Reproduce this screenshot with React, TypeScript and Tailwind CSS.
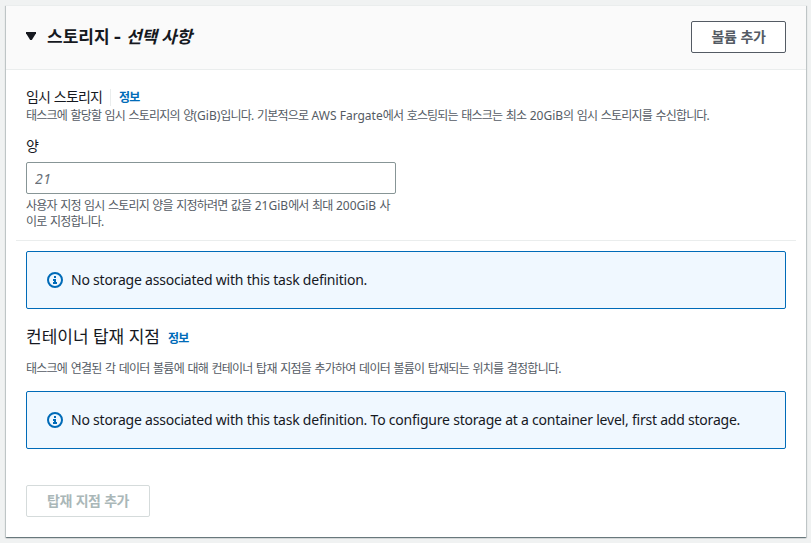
import type { ReactNode } from "react";

function InfoIcon() {
  return (
    <svg viewBox="0 0 16 16" className="h-4 w-4 shrink-0" fill="none" stroke="#006bb8" strokeWidth="2">
      <circle cx="8" cy="8" r="7" />
      <path d="M6 11h4M6 8h2v3M8 4v2" strokeWidth="2" />
    </svg>
  );
}

function Alert({ children }: { children: ReactNode }) {
  return (
    <div className="flex h-[58px] items-center gap-2 rounded-[2px] border border-[#006bb8] bg-[#f0f8ff] px-5 text-sm tracking-[-0.22px] text-[#16191f]">
      <InfoIcon />
      {children}
    </div>
  );
}

function InfoLink() {
  return <a className="text-xs leading-4 font-bold tracking-[-0.7px] text-[#006bb8]">정보</a>;
}

function Latin({ children }: { children: ReactNode }) {
  return <span className="tracking-normal [word-spacing:0px]">{children}</span>;
}

export default function App() {
  return (
    <div className="h-[543px] w-[811px] overflow-hidden bg-[#f0f2f2] pt-[5px] pl-[6px] font-['Noto_Sans','Noto_Sans_CJK_KR',sans-serif] whitespace-nowrap">
      <section className="flex h-[532px] w-[800px] flex-col border-t border-[#eaeded] bg-white shadow-[0_1px_1px_0_rgba(0,28,36,0.4),1px_1px_1px_0_rgba(0,28,36,0.15),-1px_1px_1px_0_rgba(0,28,36,0.15)]">
        <header className="flex h-16 shrink-0 items-center justify-between border-b border-[#eaeded] bg-[#fafafa] px-5 pb-[2px]">
          <div className="flex items-center">
            <svg viewBox="0 0 10 8" className="mb-[2px] h-2 w-[10px]" fill="#16191f">
              <path d="M0 0h10v1.2L5.8 8H4.2L0 1.2z" />
            </svg>
            <h2 className="ml-[11px] flex text-[17px] leading-6 font-bold whitespace-pre text-[#16191f]">
              <span>스토리지 </span>
              <span className="w-3 origin-left scale-x-125">- </span>
              <span className="tracking-[-0.2px] italic">선택 사항</span>
            </h2>
          </div>
          <button className="h-8 w-[95px] rounded-[2px] border border-[#545b64] bg-white text-sm leading-5 font-bold text-[#545b64]">
            <span className="tracking-[-0.4px] [word-spacing:1px]">볼륨 추가</span>
          </button>
        </header>

        <div className="flex flex-col px-5 pt-[17px]">
          <div className="flex h-5 items-center text-sm text-[#16191f]">
            <span className="tracking-[-0.85px] [word-spacing:1px]">임시 스토리지</span>
            <span className="mr-2 ml-2 h-[17px] w-px bg-[#eaeded]" />
            <span className="flex pt-px"><InfoLink /></span>
          </div>
          <p className="mt-px h-4 text-xs leading-4 tracking-[-0.8px] text-[#545b64] [word-spacing:1.15px]">
            태스크에 할당할 임시 스토리지의 양<Latin>(GiB)</Latin>입니다. 기본적으로 <Latin>AWS Fargate</Latin>에서 호스팅되는 태스크는 최소 <Latin>20GiB</Latin>의 임시 스토리지를 수신합니다.
          </p>
          <label className="mt-3 h-5 text-sm leading-5 tracking-[-0.6px] text-[#16191f]">양</label>
          <input
            placeholder="21"
            className="mt-[6px] h-8 w-[370px] rounded-[2px] border border-[#879596] bg-white px-2 text-sm tracking-[0.5px] text-[#16191f] placeholder:text-[#687078] placeholder:italic"
          />
          <p className="mt-1 h-8 w-[370px] text-xs leading-4 tracking-[-0.8px] text-[#545b64] [word-spacing:1.1px]">
            사용자 지정 임시 스토리지 양을 지정하려면 값을 <Latin>21GiB</Latin>에서 최대 <Latin>200GiB</Latin> 사
            <br />
            이로 지정합니다.
          </p>
        </div>

        <hr className="mx-[10px] mt-[10px] border-t border-[#eaeded]" />

        <div className="flex flex-col px-5 pt-[10px]">
          <Alert><span>No storage associated with this task definition.</span></Alert>
          <div className="mt-4 flex h-6 items-center gap-2">
            <h3 className="text-[17px] leading-6 text-[#16191f]">컨테이너 탑재 지점</h3>
            <span className="flex pt-1"><InfoLink /></span>
          </div>
          <p className="mt-3 mb-[14px] h-4 text-xs leading-4 tracking-[-0.75px] text-[#545b64] [word-spacing:1.1px]">
            태스크에 연결된 각 데이터 볼륨에 대해 컨테이너 탑재 지점을 추가하여 데이터 볼륨이 탑재되는 위치를 결정합니다.
          </p>
          <Alert><span>No storage associated with this task definition. To configure storage at a container level, first add storage.</span></Alert>
          <button disabled className="mt-9 h-8 w-[124px] rounded-[2px] border border-[#d5dbdb] bg-white text-sm font-bold text-[#aab7b8]">
            <span className="tracking-[-0.6px] [word-spacing:1px]">탑재 지점 추가</span>
          </button>
        </div>
      </section>
    </div>
  );
}
